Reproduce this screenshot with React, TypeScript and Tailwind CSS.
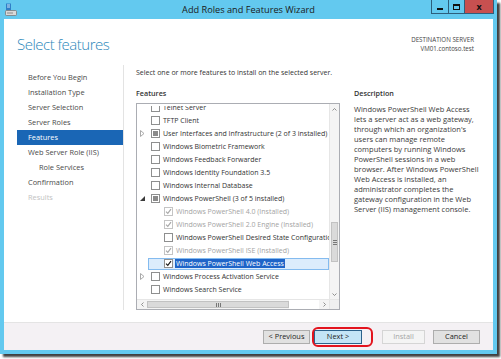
import React from "react";

type Cb = "un" | "ind" | "inst" | "chk";
type Row = { lvl: number; arrow?: "col" | "exp"; cb: Cb; text: string; sel?: boolean; gray?: boolean };

const rows: Row[] = [
  { lvl: 0, cb: "un", text: "Telnet Server" },
  { lvl: 0, cb: "un", text: "TFTP Client" },
  { lvl: 0, arrow: "col", cb: "ind", text: "User Interfaces and Infrastructure (2 of 3 installed)" },
  { lvl: 0, cb: "un", text: "Windows Biometric Framework" },
  { lvl: 0, cb: "un", text: "Windows Feedback Forwarder" },
  { lvl: 0, cb: "un", text: "Windows Identity Foundation 3.5" },
  { lvl: 0, cb: "un", text: "Windows Internal Database" },
  { lvl: 0, arrow: "exp", cb: "ind", text: "Windows PowerShell (3 of 5 installed)" },
  { lvl: 1, cb: "inst", text: "Windows PowerShell 4.0 (Installed)", gray: true },
  { lvl: 1, cb: "inst", text: "Windows PowerShell 2.0 Engine (Installed)", gray: true },
  { lvl: 1, cb: "un", text: "Windows PowerShell Desired State Configuration Service" },
  { lvl: 1, cb: "inst", text: "Windows PowerShell ISE (Installed)", gray: true },
  { lvl: 1, cb: "chk", text: "Windows PowerShell Web Access", sel: true },
  { lvl: 0, arrow: "col", cb: "un", text: "Windows Process Activation Service" },
  { lvl: 0, cb: "un", text: "Windows Search Service" },
];

const nav = [
  { t: "Before You Begin" },
  { t: "Installation Type" },
  { t: "Server Selection" },
  { t: "Server Roles" },
  { t: "Features", active: true },
  { t: "Web Server Role (IIS)" },
  { t: "Role Services", indent: true },
  { t: "Confirmation" },
  { t: "Results", disabled: true },
];

const desc = [
  "Windows PowerShell Web Access",
  "lets a server act as a web gateway,",
  "through which an organization's",
  "users can manage remote",
  "computers by running Windows",
  "PowerShell sessions in a web",
  "browser. After Windows PowerShell",
  "Web Access is installed, an",
  "administrator completes the",
  "gateway configuration in the Web",
  "Server (IIS) management console.",
];

function CheckBox({ kind }: { kind: Cb }) {
  const border = kind === "inst" ? "border-[#c4c4c4]" : "border-[#8e8f8f]";
  return (
    <div className={`w-[9px] h-[9px] border ${border} bg-white flex items-center justify-center shrink-0`}>
      {kind === "ind" && <div className="w-[5px] h-[5px] bg-[#8a8a8a]" />}
      {(kind === "inst" || kind === "chk") && (
        <svg width="7" height="7" viewBox="0 0 7 7">
          <path
            d="M1 3.6 L2.8 5.4 L6 1.2"
            fill="none"
            stroke={kind === "chk" ? "#1a1a1a" : "#a8a8a8"}
            strokeWidth="1.2"
          />
        </svg>
      )}
    </div>
  );
}

function Arrow({ kind }: { kind?: "col" | "exp" }) {
  if (kind === "col")
    return (
      <svg width="5" height="7" viewBox="0 0 5 7">
        <path d="M0.5 0.5 L4 3.5 L0.5 6.5 Z" fill="none" stroke="#a0a0a0" strokeWidth="0.9" />
      </svg>
    );
  if (kind === "exp")
    return (
      <svg width="5" height="5" viewBox="0 0 5 5">
        <path d="M5 0 L5 5 L0 5 Z" fill="#3a3a3a" />
      </svg>
    );
  return null;
}

function TitleIcon() {
  return (
    <svg width="12" height="13" viewBox="0 0 12 13">
      <rect x="1" y="0.5" width="5" height="7" fill="#2f7fc7" />
      <rect x="2" y="1.5" width="3" height="1" fill="#cfe6f7" />
      <rect x="2" y="3.5" width="3" height="1" fill="#cfe6f7" />
      <rect x="0.5" y="7.5" width="11" height="5" rx="1" fill="#d9d9d9" stroke="#7a7a7a" strokeWidth="0.8" />
      <rect x="2" y="9.5" width="6" height="1" fill="#8a8a8a" />
    </svg>
  );
}

export default function App() {
  const font = { fontFamily: '"Open Sans", "Noto Sans", sans-serif' };
  return (
    <div className="w-[501px] h-[359px] bg-white overflow-hidden" style={font}>
      <div className="w-[497px] h-[354px] bg-[#63c9ef] flex flex-col shadow-[3px_3px_2px_rgba(0,0,0,0.75)]">
        {/* Title bar */}
        <div className="h-[19px] grid grid-cols-[1fr_auto_1fr] items-start shrink-0">
          <div className="pl-[5px] pt-[3px]">
            <TitleIcon />
          </div>
          <div className="text-[9.2px] leading-[20px] text-[#1a1a1a] whitespace-nowrap">Add Roles and Features Wizard</div>
          <div className="flex justify-end pr-[3px]">
            <div className="flex h-[14px] border border-t-0 border-[#2d5f7d]">
              <div className="w-[17px] flex items-end justify-center pb-[3px] border-r border-[#2d5f7d]">
                <div className="w-[6px] h-[2px] bg-[#111]" />
              </div>
              <div className="w-[16px] flex items-center justify-center border-r border-[#2d5f7d]">
                <div className="w-[7px] h-[6px] border border-t-2 border-[#111]" />
              </div>
              <div className="w-[28px] bg-[#c75050] flex items-center justify-center text-[9px] font-bold leading-none text-[#111]">
                x
              </div>
            </div>
          </div>
        </div>

        {/* Client */}
        <div className="mx-[4px] flex-1 bg-white flex flex-col text-[#3a3a3a]">
          {/* Header */}
          <div className="h-[46px] flex justify-between shrink-0">
            <div className="pl-[13px] pt-[15px] text-[15px] leading-[20px] font-light tracking-[-0.5px] text-[#2b87ba]">
              Select features
            </div>
            <div className="pr-[19px] pt-[16px] text-right text-[6.2px] leading-[9px] text-[#444]">
              <div>DESTINATION SERVER</div>
              <div>VM01.contoso.test</div>
            </div>
          </div>

          {/* Body */}
          <div className="flex-1 flex pb-[12px]">
            <div className="w-[120px] border-r border-[#e3e3e3] pt-[5px] pl-[13px] shrink-0">
              {nav.map((n) => (
                <div
                  key={n.t}
                  className={`h-[15px] leading-[15px] text-[7.4px] whitespace-nowrap w-[106px] ${
                    n.indent ? "pl-[22px]" : "pl-[11px]"
                  } ${n.active ? "bg-[#1a66b5] text-white" : n.disabled ? "text-[#c2c2c2]" : "text-[#4a4a4a]"}`}
                >
                  {n.t}
                </div>
              ))}
            </div>

            <div className="flex-1 pl-[12px] pt-[2px] flex gap-[14px]">
              {/* Left column */}
              <div className="w-[204px] flex flex-col">
                <div className="h-[12px] leading-[12px] text-[7px] whitespace-nowrap text-[#333]">
                  Select one or more features to install on the selected server.
                </div>
                <div className="mt-[8px] h-[12px] leading-[12px] text-[7.2px] font-semibold text-[#333]">Features</div>
                <div className="mt-[4px] flex-1 border border-[#abadb3] flex flex-col">
                  <div className="flex-1 flex min-h-0">
                    <div className="flex-1 overflow-hidden mt-[2px]">
                      <div className="-mt-[5px]">
                        {rows.map((r, i) => (
                          <div key={i} className="h-[13px] flex items-center">
                            <div className="w-[11px] h-full flex items-center justify-center shrink-0">
                              {r.lvl === 0 && <Arrow kind={r.arrow} />}
                            </div>
                            <div
                              className={`flex-1 h-[12px] flex items-center whitespace-nowrap ${
                                r.sel ? "bg-[#dcecfc] border border-[#84bbef]" : "border border-transparent"
                              }`}
                              style={{ paddingLeft: 2 + r.lvl * 13 }}
                            >
                              <CheckBox kind={r.cb} />
                              <span
                                className={`ml-[2px] text-[7px] leading-[9px] px-[1px] ${
                                  r.sel ? "bg-[#1e64c8] text-white" : r.gray ? "text-[#a3a3a3]" : "text-[#333]"
                                }`}
                              >
                                {r.text}
                              </span>
                            </div>
                          </div>
                        ))}
                      </div>
                    </div>
                    {/* vertical scrollbar */}
                    <div className="w-[10px] bg-[#f4f4f4] border-l border-[#e6e6e6] flex flex-col shrink-0">
                      <div className="h-[10px] flex items-center justify-center">
                        <svg width="5" height="3" viewBox="0 0 5 3">
                          <path d="M0.5 2.5 L2.5 0.5 L4.5 2.5" fill="none" stroke="#777" strokeWidth="0.8" />
                        </svg>
                      </div>
                      <div className="h-[108px]" />
                      <div className="h-[40px] mx-[1px] bg-[#dadada] border border-[#c2c2c2] flex items-center justify-center">
                        <div className="flex flex-col gap-[1px]">
                          <div className="w-[4px] h-[1px] bg-[#777]" />
                          <div className="w-[4px] h-[1px] bg-[#777]" />
                          <div className="w-[4px] h-[1px] bg-[#777]" />
                        </div>
                      </div>
                      <div className="flex-1" />
                      <div className="h-[10px] flex items-center justify-center">
                        <svg width="5" height="3" viewBox="0 0 5 3">
                          <path d="M0.5 0.5 L2.5 2.5 L4.5 0.5" fill="none" stroke="#777" strokeWidth="0.8" />
                        </svg>
                      </div>
                    </div>
                  </div>
                  {/* horizontal scrollbar */}
                  <div className="h-[10px] flex bg-[#f4f4f4] border-t border-[#e6e6e6] shrink-0">
                    <div className="w-[10px] flex items-center justify-center">
                      <svg width="3" height="5" viewBox="0 0 3 5">
                        <path d="M2.5 0.5 L0.5 2.5 L2.5 4.5" fill="none" stroke="#777" strokeWidth="0.8" />
                      </svg>
                    </div>
                    <div className="w-[142px] my-[1px] bg-[#dadada] border border-[#c2c2c2] flex items-center justify-center">
                      <div className="flex gap-[1px]">
                        <div className="w-[1px] h-[4px] bg-[#777]" />
                        <div className="w-[1px] h-[4px] bg-[#777]" />
                        <div className="w-[1px] h-[4px] bg-[#777]" />
                      </div>
                    </div>
                    <div className="flex-1 bg-white" />
                    <div className="w-[10px] flex items-center justify-center">
                      <svg width="3" height="5" viewBox="0 0 3 5">
                        <path d="M0.5 0.5 L2.5 2.5 L0.5 4.5" fill="none" stroke="#777" strokeWidth="0.8" />
                      </svg>
                    </div>
                    <div className="w-[10px] bg-[#f0f0f0] border-l border-[#e6e6e6]" />
                  </div>
                </div>
              </div>

              {/* Description */}
              <div className="flex flex-col">
                <div className="mt-[20px] h-[12px] leading-[12px] text-[7.2px] font-semibold text-[#333]">Description</div>
                <div className="mt-[5px] text-[7.5px] leading-[10px] text-[#3a3a3a] whitespace-nowrap">
                  {desc.map((l) => (
                    <div key={l}>{l}</div>
                  ))}
                </div>
              </div>
            </div>
          </div>

          {/* Footer */}
          <div className="h-[28px] bg-[#f4f1f4] border-t border-[#e4e4e4] flex items-center justify-end pr-[13px] shrink-0">
            <button className="w-[47px] h-[14px] bg-[#e1e1e1] border border-[#adadad] text-[7.4px] leading-none text-[#222]">
              &lt; Previous
            </button>
            <div className="relative ml-[4px]">
              <button className="w-[48px] h-[14px] bg-[#c4e5f6] border border-[#2c628b] text-[7.4px] leading-none text-[#222] block">
                Next &gt;
              </button>
              <div className="absolute -left-[2px] -right-[11px] -top-[3px] -bottom-[3px] border-2 border-[#e3141e] rounded-[6px]" />
            </div>
            <button className="ml-[20px] w-[43px] h-[14px] bg-[#f4f4f4] border border-[#d5d5d5] text-[7.4px] leading-none text-[#a6a6a6]">
              Install
            </button>
            <button className="ml-[8px] w-[47px] h-[14px] bg-[#e1e1e1] border border-[#adadad] text-[7.4px] leading-none text-[#222]">
              Cancel
            </button>
          </div>
        </div>
        <div className="h-[4px] shrink-0" />
      </div>
    </div>
  );
}
